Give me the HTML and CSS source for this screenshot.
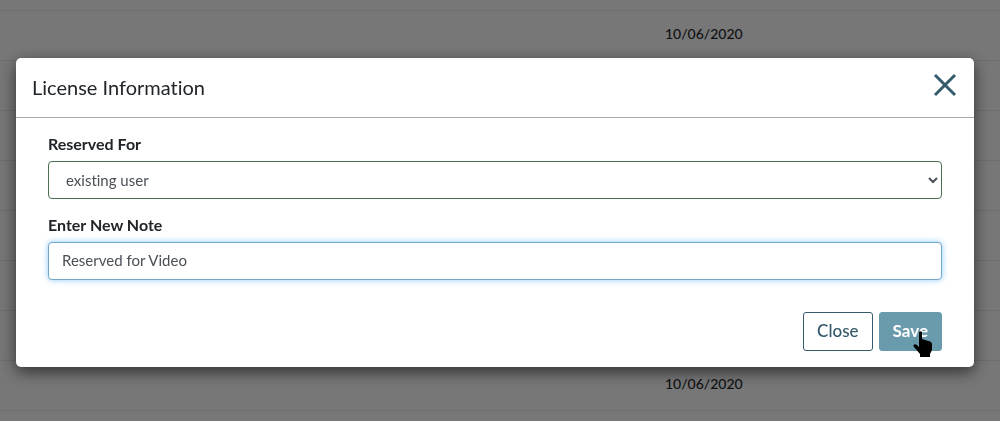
FILE: index.html
```html
<!DOCTYPE html>
<html lang="en">
<head>
    <meta charset="UTF-8">
    <meta name="viewport" content="width=device-width, initial-scale=1.0">
    <title>License Information</title>
    <link rel="stylesheet" href="styles.css">
</head>
<body>
    <table class="licenses">
        <tbody>
            <tr class="licenses-top"><td></td><td></td></tr>
            <tr><td></td><td>10/06/2020</td></tr>
            <tr><td></td><td></td></tr>
            <tr><td></td><td></td></tr>
            <tr><td></td><td></td></tr>
            <tr><td></td><td></td></tr>
            <tr><td></td><td></td></tr>
            <tr><td></td><td></td></tr>
            <tr><td></td><td>10/06/2020</td></tr>
        </tbody>
    </table>

    <div class="overlay">
        <form class="modal" role="dialog" aria-labelledby="modal-title">
            <div class="modal-header">
                <h1 class="modal-title" id="modal-title">License Information</h1>
                <button type="button" class="modal-x" aria-label="Dismiss">
                    <svg width="24" height="24" viewBox="0 0 24 24" aria-hidden="true">
                        <path d="M2 2L22 22M22 2L2 22" fill="none" stroke="#355a6b" stroke-width="3"/>
                    </svg>
                </button>
            </div>

            <div class="modal-body">
                <div class="field">
                    <label for="reserved-for">Reserved For</label>
                    <select id="reserved-for" class="control control-select">
                        <option>existing user</option>
                    </select>
                </div>
                <div class="field">
                    <label for="note">Enter New Note</label>
                    <input type="text" id="note" class="control control-active" value="Reserved for Video">
                </div>
            </div>

            <div class="modal-footer">
                <button type="button" class="btn btn-close">Close</button>
                <button type="button" class="btn btn-save">Save</button>
                <svg class="pointer" width="20" height="27" viewBox="0 0 20 27" aria-hidden="true">
                    <path d="M6 1Q7.500 -0.500 9 1V8L17 10.500Q19 11 19 13V19L17 23V26H7V23L1 16Q0 14.500 1 13.500Q3 12.500 5 15L6 16Z" fill="#000"/>
                </svg>
            </div>
        </form>
    </div>
</body>
</html>
```

FILE: styles.css
```css
* {
    box-sizing: border-box;
}

body {
    margin: 0;
    height: 100vh;
    overflow: hidden;
    background-color: #efefef;
    color: #212529;
    font-family: Lato, "Open Sans", sans-serif;
    font-size: 15px;
    font-variant-ligatures: none;
}

/* table behind the dialog */
.licenses {
    width: 100%;
    table-layout: fixed;
    border-collapse: collapse;
}

.licenses td {
    height: 50px;
    padding: 0 0 3px;
    border-bottom: 1px solid #dcdcdc;
    font-size: 14px;
    font-weight: 500;
}

.licenses td:first-child {
    width: 66.5%;
}

.licenses .licenses-top td {
    height: 10px;
}

.overlay {
    position: fixed;
    inset: 0;
    padding: 58px 26px 0 16px;
    background-color: rgba(0, 0, 0, 0.5);
}

.modal {
    background-color: #fff;
    border-radius: 5px;
    box-shadow: 0 5px 16px rgba(0, 0, 0, 0.6);
}

.modal-header {
    display: flex;
    align-items: center;
    justify-content: space-between;
    height: 60px;
    padding: 0 17px 6px 16px;
    border-bottom: 1px solid #aaa;
}

.modal-title {
    margin: 0;
    padding-top: 4px;
    font-size: 20px;
    font-weight: 400;
}

.modal-x {
    display: flex;
    padding: 0;
    border: 0;
    background: none;
}

.modal-body {
    padding: 16px 32px 0;
}

.field {
    margin-bottom: 16px;
}

.field label {
    display: block;
    margin-bottom: 7px;
    line-height: 20px;
    font-size: 16px;
    font-weight: 700;
}

.control {
    display: block;
    width: 100%;
    height: 38px;
    padding: 0 13px 2px;
    border: 1px solid #4c7152;
    border-radius: 4px;
    background-color: #fff;
    color: #495057;
    font: inherit;
    font-variant-ligatures: none;
}

.control-select {
    padding: 0 2px 0 13px;
}

.control-active {
    border-color: #72a5c9;
    box-shadow: 0 0 6px #8ecbf5;
    outline: none;
}

.modal-footer {
    position: relative;
    display: flex;
    justify-content: flex-end;
    gap: 6px;
    padding: 16px 32px;
}

.btn {
    height: 39px;
    padding: 0 13px 2px;
    border: 1px solid #355a6b;
    border-radius: 3px;
    font: inherit;
    font-size: 17px;
    font-weight: 500;
}

.btn-close {
    background-color: #fff;
    color: #355a6b;
}

.btn-save {
    border-color: #6a9bac;
    background-color: #6a9bac;
    color: #fff;
    font-weight: 700;
}

.pointer {
    position: absolute;
    right: 41px;
    bottom: 9px;
}
```
